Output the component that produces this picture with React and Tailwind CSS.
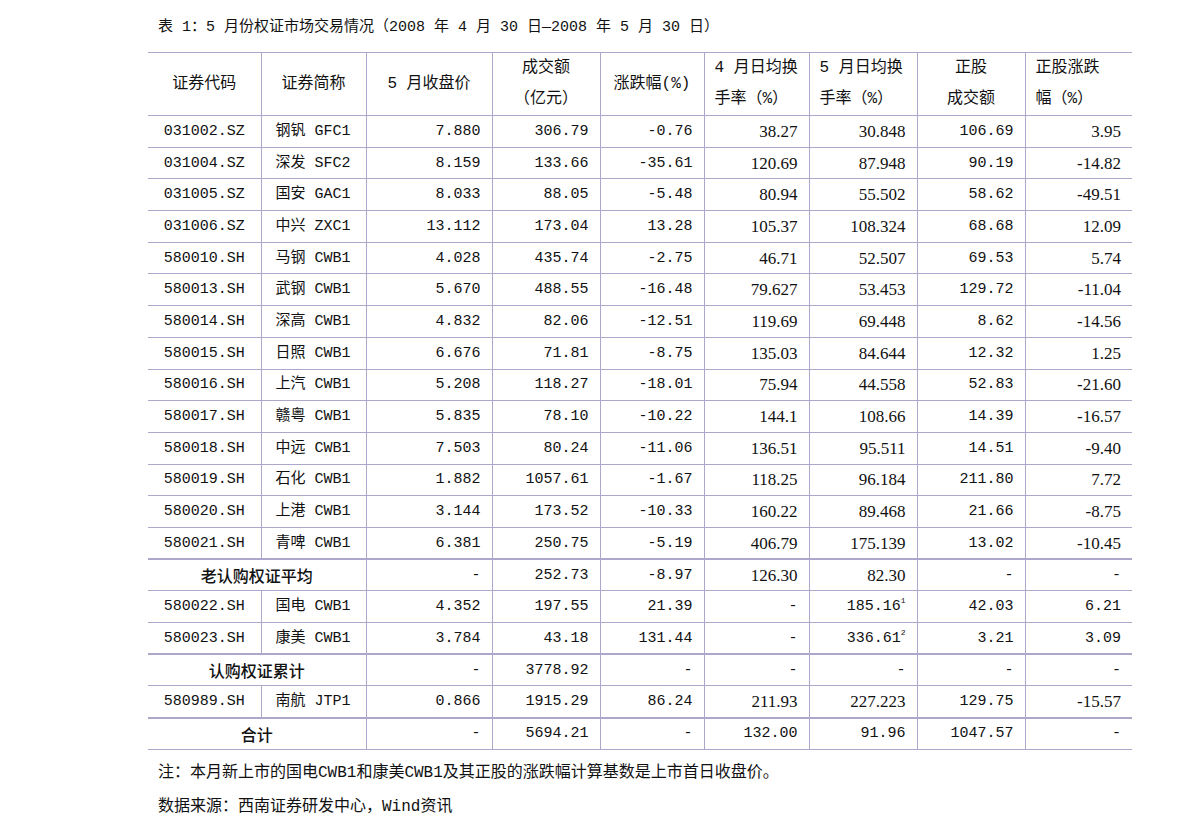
import React from 'react';

const SONG = "font-['Liberation_Mono','Noto_Sans_CJK_SC',monospace]";
const TIMES = "font-['Liberation_Serif','Noto_Sans_CJK_SC',serif] text-[17px]";
const HEI = "font-['Noto_Sans_CJK_SC',sans-serif]";
// keep full-width brackets at full width
const FULL = "[text-spacing-trim:space-all] [font-feature-settings:'chws'_0,'halt'_0]";

const widths = ['w-[113px]', 'w-[105px]', 'w-[126px]', 'w-[108px]', 'w-[104px]', 'w-[105px]', 'w-[108px]', 'w-[108px]', 'w-[107px]'];

// T(): cell set in Times instead of the Song-style mono
const T = (v) => ({ v, t: true });

const rows = [
  ['031002.SZ', '钢钒 GFC1', '7.880', '306.79', '-0.76', T('38.27'), T('30.848'), '106.69', T('3.95')],
  ['031004.SZ', '深发 SFC2', '8.159', '133.66', '-35.61', T('120.69'), T('87.948'), '90.19', T('-14.82')],
  ['031005.SZ', '国安 GAC1', '8.033', '88.05', '-5.48', T('80.94'), T('55.502'), '58.62', T('-49.51')],
  ['031006.SZ', '中兴 ZXC1', '13.112', '173.04', '13.28', T('105.37'), T('108.324'), '68.68', T('12.09')],
  ['580010.SH', '马钢 CWB1', '4.028', '435.74', '-2.75', T('46.71'), T('52.507'), '69.53', T('5.74')],
  ['580013.SH', '武钢 CWB1', '5.670', '488.55', '-16.48', T('79.627'), T('53.453'), '129.72', T('-11.04')],
  ['580014.SH', '深高 CWB1', '4.832', '82.06', '-12.51', T('119.69'), T('69.448'), '8.62', T('-14.56')],
  ['580015.SH', '日照 CWB1', '6.676', '71.81', '-8.75', T('135.03'), T('84.644'), '12.32', T('1.25')],
  ['580016.SH', '上汽 CWB1', '5.208', '118.27', '-18.01', T('75.94'), T('44.558'), '52.83', T('-21.60')],
  ['580017.SH', '赣粤 CWB1', '5.835', '78.10', '-10.22', T('144.1'), T('108.66'), '14.39', T('-16.57')],
  ['580018.SH', '中远 CWB1', '7.503', '80.24', '-11.06', T('136.51'), T('95.511'), '14.51', T('-9.40')],
  ['580019.SH', '石化 CWB1', '1.882', '1057.61', '-1.67', T('118.25'), T('96.184'), '211.80', T('7.72')],
  ['580020.SH', '上港 CWB1', '3.144', '173.52', '-10.33', T('160.22'), T('89.468'), '21.66', T('-8.75')],
  ['580021.SH', '青啤 CWB1', '6.381', '250.75', '-5.19', T('406.79'), T('175.139'), '13.02', T('-10.45')],
  { label: '老认购权证平均', cells: ['-', '252.73', '-8.97', T('126.30'), T('82.30'), '-', '-'] },
  ['580022.SH', '国电 CWB1', '4.352', '197.55', '21.39', '-', { v: '185.16', sup: '1' }, '42.03', '6.21'],
  ['580023.SH', '康美 CWB1', '3.784', '43.18', '131.44', '-', { v: '336.61', sup: '2' }, '3.21', '3.09'],
  { label: '认购权证累计', cells: ['-', '3778.92', '-', '-', '-', '-', '-'] },
  ['580989.SH', '南航 JTP1', '0.866', '1915.29', '86.24', T('211.93'), T('227.223'), '129.75', T('-15.57')],
  { label: '合计', cells: ['-', '5694.21', '-', '132.00', '91.96', '1047.57', '-'] },
];

const headers = [
  ['证券代码'],
  ['证券简称'],
  ['5 月收盘价'],
  ['成交额', '（亿元）'],
  ['涨跌幅(%)'],
  ['4 月日均换', '手率（%）'],
  ['5 月日均换', '手率（%）'],
  ['正股', '成交额'],
  ['正股涨跌', '幅（%）'],
];

const line = 'border-[#aba8cc]';

function NumCell({ c, last }) {
  const o = typeof c === 'string' ? { v: c } : c;
  return (
    <td
      className={`h-[31.7px] border-t ${line} ${last ? '' : 'border-r'} pr-[11px] text-right leading-none ${
        o.t ? TIMES : `${SONG} text-[15px]`
      }`}
    >
      {o.v}
      {o.sup ? <sup className="relative top-[2px] align-top text-[8px]">{o.sup}</sup> : null}
    </td>
  );
}

export default function App() {
  return (
    <div className={`h-[837px] w-[1191px] bg-white text-[#111] ${FULL}`}>
      <div className="pl-[148px] pt-[18px]">
        <div className={`mb-[14px] pl-[10px] text-[15px] leading-[20px] ${SONG} ${FULL}`}>
          表 1：5 月份权证市场交易情况（2008 年 4 月 30 日—2008 年 5 月 30 日）
        </div>
        <table className="w-[984px] table-fixed border-collapse">
          <colgroup>
            {widths.map((w, i) => (
              <col key={i} className={w} />
            ))}
          </colgroup>
          <thead>
            <tr className={`h-[63px] border-t ${line}`}>
              {headers.map((h, i) => (
                <th
                  key={i}
                  className={`text-[16px] font-normal ${SONG} ${FULL} ${i < 8 ? `border-r ${line}` : ''} ${
                    h.length > 1 ? 'leading-[31px]' : 'leading-none'
                  } ${i >= 5 && i !== 7 ? 'pl-[10px] text-left' : 'text-center'}`}
                >
                  {h.map((l, j) => (
                    <div key={j}>{l}</div>
                  ))}
                </th>
              ))}
            </tr>
          </thead>
          <tbody>
            {rows.map((r, ri) => {
              if (!Array.isArray(r)) {
                return (
                  <tr key={ri} className={`border-b border-t-2 ${line}`}>
                    <td
                      colSpan={2}
                      className={`h-[31.7px] border-r border-t-2 ${line} text-center text-[16px] font-medium leading-none ${HEI}`}
                    >
                      {r.label}
                    </td>
                    {r.cells.map((c, i) => (
                      <NumCell key={i} c={c} last={i === r.cells.length - 1} />
                    ))}
                  </tr>
                );
              }
              return (
                <tr key={ri} className={`border-b ${line}`}>
                  <td className={`h-[31.7px] border-r border-t ${line} text-center text-[15px] leading-none ${SONG}`}>
                    {r[0]}
                  </td>
                  <td className={`border-r border-t ${line} pl-[14px] text-left text-[15px] leading-none ${SONG}`}>
                    {r[1]}
                  </td>
                  {r.slice(2).map((c, i) => (
                    <NumCell key={i} c={c} last={i === 6} />
                  ))}
                </tr>
              );
            })}
          </tbody>
        </table>
        <div className={`mt-[6px] pl-[10px] text-[16px] leading-[34px] ${SONG} ${FULL}`}>
          <div>注：本月新上市的国电CWB1和康美CWB1及其正股的涨跌幅计算基数是上市首日收盘价。</div>
          <div>数据来源：西南证券研发中心，Wind资讯</div>
        </div>
      </div>
    </div>
  );
}
